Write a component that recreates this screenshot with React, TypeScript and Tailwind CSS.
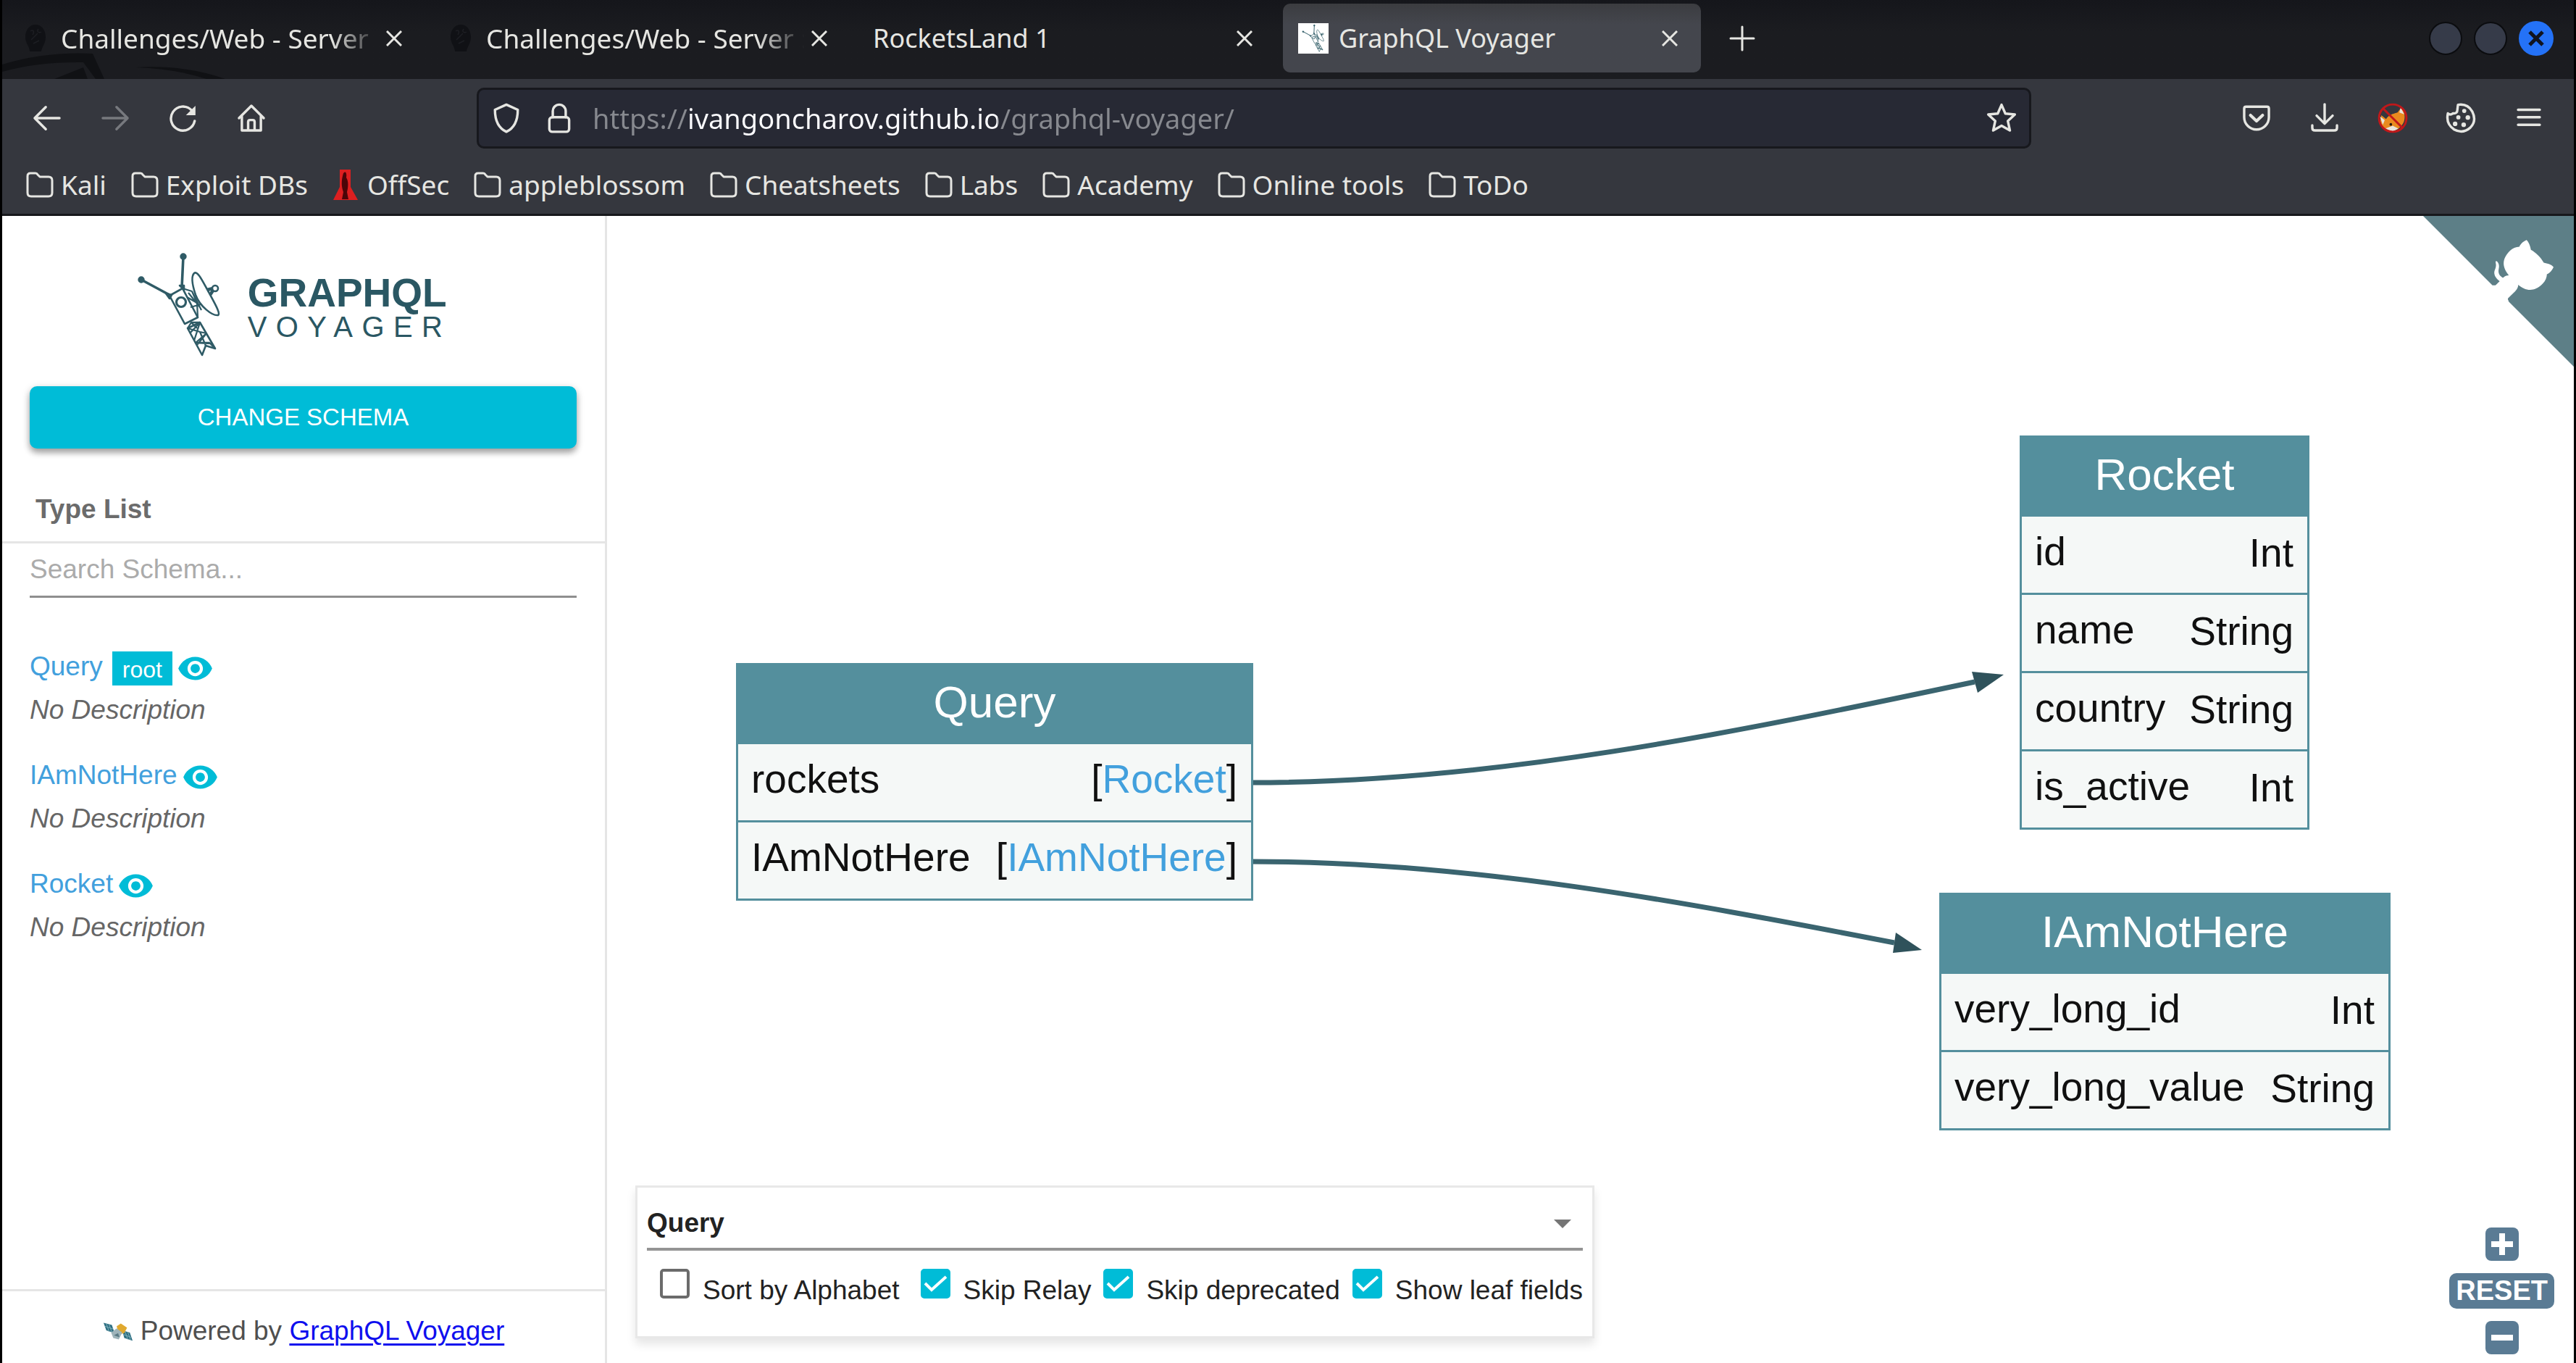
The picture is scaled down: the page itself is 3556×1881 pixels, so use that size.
import { useId, useState } from "react";
import type { ReactNode } from "react";

function VoyagerMark({ className }: { className?: string }) {
  return (
    <svg viewBox="9 10 118 150" className={className} fill="none" stroke="#2f5b66" strokeWidth="2.6" strokeLinejoin="round" aria-hidden="true">
      <path d="M15 50 54 71M73 18 71 61" strokeWidth="3.6" />
      <circle cx="15" cy="50" r="3.4" fill="#2f5b66" />
      <circle cx="73" cy="18" r="3.4" fill="#2f5b66" />
      <path d="m49 69 8 2-3 5ZM68 58l6 0 0 6Z" fill="#2f5b66" />
      <path d="M54 72 75 111 93 102 72 62Z" />
      <circle cx="70" cy="81" r="6.5" strokeWidth="3.2" />
      <path d="M72 62 85 66 92 82 93 102M78 74 92 82M80 68 96 88M83 88 97 84M85 66 98 92" strokeWidth="2.2" />
      <path d="M88 41C93 37 100 53 108 67 116 82 125 97 121 99 113 100 96 87 90 71 85 56 84 45 88 41Z" />
      <path d="M106 64 114 62M110 71 114 65" strokeWidth="4.5" />
      <circle cx="117" cy="62" r="4" />
      <path d="M79 117 99 154 104 141 117 145 96 109Z" />
      <path d="M79 117 96 122 105 124 90 137 109 137 117 145M96 109 88 134M79 117 84 109 96 109 82 124M96 122 104 141M90 137 112 138M84 109 92 117M105 124 92 140" strokeWidth="2.3" />
    </svg>
  );
}

function Icon({ children, className = "size-[42px]" }: { children: ReactNode; className?: string }) {
  return (
    <svg viewBox="0 0 16 16" className={className} fill="none" stroke="currentColor" strokeWidth="1.3" strokeLinecap="round" strokeLinejoin="round" aria-hidden="true">
      {children}
    </svg>
  );
}

function ToolButton({ label, dim, children }: { label: string; dim?: boolean; children: ReactNode }) {
  return (
    <button type="button" aria-label={label} className={dim ? "shrink-0 text-[#77797e]" : "shrink-0 text-[#e6e6e2]"}>
      {children}
    </button>
  );
}

function DarkSeal() {
  return (
    <svg viewBox="0 0 30 40" className="ml-[3px] h-[40px] w-[30px] shrink-0" aria-hidden="true">
      <path d="M15 1c8 0 14 7 14 17 0 9-5 13-6 20H7C7 31 1 27 1 18 1 8 7 1 15 1Z" fill="#101115" />
      <path d="M8 10c4-3 6 1 3 5m8-8c-3 4 1 6 4 4M9 22l9-9m-6 14 8-4" stroke="#1d1e23" strokeWidth="1.5" fill="none" />
    </svg>
  );
}

function Tab({ title, icon, active, fade }: { title: string; icon?: ReactNode; active?: boolean; fade?: boolean }) {
  return (
    <div
      className={
        active
          ? "flex h-[95px] w-[577px] shrink-0 items-center rounded-[10px] bg-linear-to-b from-[#3b3c40] to-[#44464d] to-30% pr-[32px] pl-[21px]"
          : "flex h-[95px] w-[577px] shrink-0 items-center pr-[32px] pl-[21px]"
      }
    >
      {icon}
      <button
        type="button"
        className={
          fade
            ? "min-w-0 flex-1 overflow-hidden pl-[20px] text-left text-[37px] whitespace-nowrap [mask-image:linear-gradient(to_right,#000_84%,transparent_98%)]"
            : active
              ? "min-w-0 flex-1 overflow-hidden pl-[14px] text-left text-[36px] whitespace-nowrap"
              : "min-w-0 flex-1 overflow-hidden text-left text-[36px] whitespace-nowrap"
        }
      >
        {title}
      </button>
      <button type="button" aria-label={"Close " + title} className="shrink-0">
        <svg viewBox="0 0 22 22" className="size-[22px]" fill="none" stroke="currentColor" strokeWidth="3" aria-hidden="true">
          <path d="m1 1 20 20M21 1 1 21" />
        </svg>
      </button>
    </div>
  );
}

function Bookmark({ label, red }: { label: string; red?: boolean }) {
  return (
    <a href="#" className="flex items-center gap-[10px]">
      {red ? (
        <svg viewBox="0 0 38 44" className="h-[44px] w-[38px]" aria-hidden="true">
          <path d="M10 1h15v24l10 18H1l9-18Z" fill="#dd1f20" />
          <path d="M15 6c3-4 5 0 4 6 4 6 2 16 1 20l2 10h-9l2-10c-3-8-3-16 0-26Z" fill="#4c0508" />
        </svg>
      ) : (
        <svg viewBox="0 0 38 38" className="size-[38px]" fill="none" stroke="currentColor" strokeWidth="3" strokeLinejoin="round" aria-hidden="true">
          <path d="M2 30V7q0-4 4-4h7q2 0 3 2l3 3h12q5 0 5 5v17q0 5-5 5H7q-5 0-5-5Z" />
        </svg>
      )}
      {label}
    </a>
  );
}

function BrowserChrome() {
  return (
    <header className="shrink-0 font-['Noto_Sans',sans-serif] text-[37px] leading-[52px] text-[#e6e6e2]">
      <div className="relative h-[109px] bg-linear-to-b from-[#15161b] to-[#1b1c20] to-40%">
        <svg viewBox="0 0 320 40" className="absolute bottom-0 left-0 h-[40px] w-[320px]" fill="#101114" aria-hidden="true">
          <path d="M0 20Q60 2 125 5l16 35h-12L112 17Q50 16 0 30ZM72 40l40-16 6 16Z" />
          <path d="M185 24Q250 20 308 40H282Q240 26 185 24Z" />
        </svg>
        <div className="relative flex h-full items-center gap-[10px] pb-1 pl-[7px]">
          <Tab title="Challenges/Web - Server |" icon={<DarkSeal />} fade />
          <Tab title="Challenges/Web - Server :" icon={<DarkSeal />} fade />
          <Tab title="RocketsLand 1" />
          <Tab
            title="GraphQL Voyager"
            active
            icon={
              <span className="flex size-[42px] shrink-0 items-center justify-center bg-white">
                <VoyagerMark className="h-[40px] w-[32px]" />
              </span>
            }
          />
          <button type="button" aria-label="New tab" className="ml-[26px]">
            <svg viewBox="0 0 42 42" className="size-[42px]" fill="none" stroke="currentColor" strokeWidth="3" strokeLinecap="round" aria-hidden="true">
              <path d="M21 5v32M5 21h32" />
            </svg>
          </button>
          <div className="ml-auto flex items-center gap-[16px] pr-[28px]">
            <button type="button" aria-label="Minimize" className="size-[46px] rounded-full border-2 border-[#0b0c0f] bg-[#363b49]" />
            <button type="button" aria-label="Maximize" className="size-[46px] rounded-full border-2 border-[#0b0c0f] bg-[#363b49]" />
            <button type="button" aria-label="Close window" className="flex size-[48px] items-center justify-center rounded-full bg-[#2472f7]">
              <svg viewBox="0 0 24 24" className="size-[24px]" fill="none" stroke="#10141f" strokeWidth="5" aria-hidden="true">
                <path d="m3 3 18 18M21 3 3 21" />
              </svg>
            </button>
          </div>
        </div>
      </div>

      <div className="border-b-3 border-[#17181c] bg-[#35373e]">
        <div className="flex h-[107px] items-center pr-[41px] pl-[41px]">
          <nav aria-label="Navigation" className="flex items-center gap-[52px]">
            <ToolButton label="Back">
              <Icon><path d="M7.3 2.2 1.5 8l5.800 5.800M1.500 8h13" /></Icon>
            </ToolButton>
            <ToolButton label="Forward" dim>
              <Icon><path d="M8.700 2.200 14.500 8l-5.800 5.800M14.500 8h-13" /></Icon>
            </ToolButton>
            <ToolButton label="Reload">
              <Icon><path d="M14 9.500A6.300 6.300 0 1 1 12.300 3.800" /><path d="M14.400 1.500v5h-5Z" fill="currentColor" stroke="none" /></Icon>
            </ToolButton>
            <ToolButton label="Home">
              <Icon><path d="M1.500 8 8 1.500 14.500 8M3 7v7.500h10V7M6.300 14.300V10q0-1 1-1h1.400q1 0 1 1v4.300" /></Icon>
            </ToolButton>
          </nav>
          <div className="mr-[290px] ml-[290px] flex h-[84px] min-w-0 flex-1 items-center rounded-[10px] border-3 border-[#17181d] bg-[#272934] pr-[17px] pl-[17px]">
            <ToolButton label="Tracking protection">
              <Icon><path d="M8 .9 14 3.600C14 9 12 13.300 8 15.200 4 13.300 2 9 2 3.600Z" /></Icon>
            </ToolButton>
            <span className="w-[31px]" />
            <ToolButton label="Connection security">
              <Icon><rect x="2.800" y="7.500" width="10.400" height="7.700" rx="1.500" /><path d="M4.600 7.500V4.300a3.400 3.400 0 0 1 6.800 0v3.200" /></Icon>
            </ToolButton>
            <input
              type="text"
              aria-label="Address"
              defaultValue="https://ivangoncharov.github.io/graphql-voyager/"
              className="ml-[25px] h-[60px] min-w-0 flex-1 bg-[linear-gradient(to_right,#87898f_132px,#fbfbfe_132px,#fbfbfe_559px,#87898f_559px)] bg-clip-text text-[38px] text-transparent outline-none"
            />
            <ToolButton label="Bookmark this page">
              <Icon><path d="m8 1 2 4.600 5 .5-3.700 3.400 1.100 5L8 12l-4.400 2.500 1.100-5L1 6.100l5-.5Z" /></Icon>
            </ToolButton>
          </div>
          <div className="flex items-center gap-[52px]">
            <ToolButton label="Save to Pocket">
              <Icon><path d="M2.500 2h11q1 0 1 1v4.500a6.500 6.500 0 0 1-13 0V3q0-1 1-1Z" /><path d="M4.800 6.500 8 9.500l3.200-3" strokeWidth="1.600" /></Icon>
            </ToolButton>
            <ToolButton label="Downloads">
              <Icon><path d="M8 .7v10M3.800 6.700 8 10.900l4.200-4.200M1.500 11.800V13q0 1.500 1.500 1.500h10q1.500 0 1.500-1.500v-1.200" /></Icon>
            </ToolButton>
            <ToolButton label="Proxy extension">
              <Icon>
                <path d="M12.500 2.500c2 2 2 5 1.500 7-1 3-4 5.500-7 5-3 0-5-2-5.500-5L2 6.500l2.500 2C6 6 9 5.500 10.500 5Z" fill="#ea8a1e" stroke="none" />
                <path d="M12.200 2.300 14 6l-2.500-1ZM1.200 7l2.600 2-1 2.500ZM4 13.500 8 12l3 1.500-3 1.500Z" fill="#e8e4dc" stroke="none" />
                <circle cx="7" cy="11.300" r=".7" fill="#2b1a10" stroke="none" />
                <circle cx="8" cy="8" r="7.200" stroke="#c0181a" strokeWidth="1.100" />
                <path d="m3 3 10 10" stroke="#c0181a" strokeWidth="1.100" />
              </Icon>
            </ToolButton>
            <ToolButton label="Cookie extension">
              <Icon>
                <path d="M6.500 1q5-.8 7.500 3.500 2.500 5-1 8.500-4 3.500-8.500 1Q0 11 1.200 5.500q1.300 1.200 2.600 0 2.400.3 2.400-2Z" />
                <g fill="currentColor" stroke="none"><circle cx="9.800" cy="4.200" r="1.100" /><circle cx="6.700" cy="7.600" r="1.100" /><circle cx="11.700" cy="7.700" r="1.200" /><circle cx="5" cy="11" r="1.200" /><circle cx="9.500" cy="11.500" r="1.200" /></g>
              </Icon>
            </ToolButton>
            <ToolButton label="Menu">
              <Icon><path d="M2.300 3.600h11.400M2.300 7.500h11.400M2.300 11.500h11.400" /></Icon>
            </ToolButton>
          </div>
        </div>
        <nav aria-label="Bookmarks" className="flex h-[79px] items-start gap-[34px] pt-[13px] pl-[33px]">
          <Bookmark label="Kali" />
          <Bookmark label="Exploit DBs" />
          <Bookmark label="OffSec" red />
          <Bookmark label="appleblossom" />
          <Bookmark label="Cheatsheets" />
          <Bookmark label="Labs" />
          <Bookmark label="Academy" />
          <Bookmark label="Online tools" />
          <Bookmark label="ToDo" />
        </nav>
      </div>
    </header>
  );
}

function TypeEntry({ name, root }: { name: string; root?: boolean }) {
  return (
    <li className="mb-[30px] leading-[60px]">
      <div className="flex items-center">
        <a href="#" className="text-[#42a0dd]">{name}</a>
        {root && (
          <span className="mt-[5px] ml-[13px] flex h-[47px] items-center bg-[#00bcd7] px-[14px] pt-[2px] text-[32px] text-white">root</span>
        )}
        <button type="button" aria-label={"Focus " + name} className="mt-[5px] ml-[6px]">
          <svg viewBox="0 0 24 24" className="size-[51px]" fill="#00bcd7" aria-hidden="true">
            <path d="M12 4.500C7 4.500 2.730 7.610 1 12c1.730 4.390 6 7.500 11 7.500s9.270-3.110 11-7.500c-1.730-4.390-6-7.500-11-7.500zM12 17c-2.760 0-5-2.240-5-5s2.240-5 5-5 5 2.240 5 5-2.240 5-5 5zm0-8c-1.660 0-3 1.340-3 3s1.340 3 3 3 3-1.340 3-3-1.340-3-3-3z" />
          </svg>
        </button>
      </div>
      <p className="text-[#666] italic">No Description</p>
    </li>
  );
}

function Satellite() {
  return (
    <svg viewBox="0 0 44 30" className="h-[30px] w-[42px]" aria-hidden="true">
      <path d="m1 3 12 3 4 12-12-4Z" fill="#2e6f82" />
      <path d="m28 14 11 3 4 12-12-4Z" fill="#2e6f82" />
      <path d="M5 4l4 12M9 5l4 12M3 8l12 4M32 15l4 12M36 16l4 12M30 20l11 4" stroke="#7fb0bb" strokeWidth="1" />
      <path d="m20 8 6-4 9 6-4 8-8 2Z" fill="#e0a92f" />
      <path d="m12 17 8-6 8 6-5 10-8-2Z" fill="#9fb4ba" />
      <path d="m16 21 6-3 2 6Z" fill="#5a7a84" />
    </svg>
  );
}

function Sidebar() {
  return (
    <aside className="flex w-[835px] shrink-0 flex-col border-r-3 border-[#e5e5e5] text-[37px] leading-[60px]">
      <div className="flex items-center justify-center pt-[48px] pr-[26px] text-[#2a5763]">
        <VoyagerMark className="h-[150px] w-[118px]" />
        <h1 className="pt-[6px] pl-[35px]">
          <span className="block text-[55px] leading-[54px] font-bold">GRAPHQL</span>
          <span className="block text-[40px] leading-[41px] tracking-[0.31em]">VOYAGER</span>
        </h1>
      </div>
      <button
        type="button"
        className="mt-[37px] mr-[39px] ml-[38px] h-[86px] rounded-[10px] bg-[#00bcd7] text-[33px] leading-[86px] text-white shadow-[0_6px_8px_rgba(0,0,0,0.3),0_2px_12px_rgba(0,0,0,0.15)]"
      >
        CHANGE SCHEMA
      </button>
      <h2 className="border-b-3 border-[#e5e5e5] pt-[54px] pb-[14px] pl-[46px] font-bold text-[#6b6b6b]">Type List</h2>
      <input
        type="text"
        aria-label="Search schema"
        placeholder="Search Schema..."
        className="mr-[39px] ml-[38px] h-[75px] border-b-3 border-[#8f8f8f] outline-none placeholder:text-[#ababab]"
      />
      <ul className="flex-1 pt-[65px] pl-[38px]">
        <TypeEntry name="Query" root />
        <TypeEntry name="IAmNotHere" />
        <TypeEntry name="Rocket" />
      </ul>
      <p className="flex h-[102px] items-center justify-center border-t-3 border-[#e5e5e5] pt-[10px] text-[#4f4f4f]">
        <Satellite />
        <span className="pl-[10px]">
          Powered by{" "}
          <a href="#" className="text-[#0f0fee] underline decoration-3 underline-offset-[5px]">GraphQL Voyager</a>
        </span>
      </p>
    </aside>
  );
}

type Field = { name: string; type: string; list?: boolean };

function Entity({ title, fields, className }: { title: string; fields: Field[]; className: string }) {
  return (
    <section className={className}>
      <h3 className="h-[112px] bg-[#548f9d] text-center text-[62px] leading-[108px] text-white">{title}</h3>
      <ul className="border-x-3 border-[#548f9d]">
        {fields.map((f) => (
          <li key={f.name} className="flex h-[108px] items-center justify-between border-b-3 border-[#548f9d] bg-[#f5f8f7] pr-[19px] pb-[9px] pl-[18px] text-[55px] leading-[64px] text-[#101010]">
            <span>{f.name}</span>
            {f.list ? (
              <span>[<a href="#" className="text-[#42a0dd]">{f.type}</a>]</span>
            ) : (
              <span className="pt-[4px]">{f.type}</span>
            )}
          </li>
        ))}
      </ul>
    </section>
  );
}

function Check({ label, initial, className }: { label: string; initial: boolean; className?: string }) {
  const [on, setOn] = useState(initial);
  const id = useId();
  return (
    <div className={className}>
      <span className="relative flex size-[41px]">
        <input
          id={id}
          type="checkbox"
          checked={on}
          onChange={() => setOn(!on)}
          className="size-[41px] appearance-none rounded-[5px] border-4 border-[#6b6b6b] checked:border-[#00bcd7] checked:bg-[#00bcd7]"
        />
        {on && (
          <svg viewBox="0 0 41 41" className="pointer-events-none absolute inset-0 size-[41px]" fill="none" stroke="#fff" strokeWidth="4" aria-hidden="true">
            <path d="m6 20 9 9L35 11" />
          </svg>
        )}
      </span>
      <label htmlFor={id} className="pt-[20px] pl-[18px] whitespace-nowrap">{label}</label>
    </div>
  );
}

function Settings() {
  return (
    <div className="absolute bottom-[34px] left-[39px] border-3 border-[#e8e8e8] bg-white px-[13px] pb-[43px] text-[37px] leading-[40px] text-[#222] shadow-[0_8px_12px_rgba(0,0,0,0.1)]">
      <div className="relative">
        <select aria-label="Root type" className="h-[87px] w-full appearance-none border-b-4 border-[#949494] pt-[14px] font-bold outline-none">
          <option>Query</option>
        </select>
        <svg viewBox="0 0 24 12" className="pointer-events-none absolute top-[44px] right-[16px] h-[12px] w-[24px]" fill="#757575" aria-hidden="true">
          <path d="M0 0h24L12 12Z" />
        </svg>
      </div>
      <div className="flex items-center gap-[17px] pt-[15px] pl-[18px]">
        <Check label="Sort by Alphabet" initial={false} className="mr-[12px] flex items-center" />
        <Check label="Skip Relay" initial className="flex items-center" />
        <Check label="Skip deprecated" initial className="flex items-center" />
        <Check label="Show leaf fields" initial className="flex items-center" />
      </div>
    </div>
  );
}

function GithubCorner() {
  return (
    <a href="#" aria-label="View source on GitHub" className="absolute top-0 right-0">
      <svg viewBox="0 0 250 250" className="size-[208px]" fill="#fff" aria-hidden="true">
        <path d="M0,0 L115,115 L130,115 L142,142 L250,250 L250,0 Z" fill="#5d7f87" />
        <path d="M128.3,109.0 C113.8,99.7 119.0,89.6 119.0,89.6 C122.0,82.7 120.5,78.6 120.5,78.6 C119.2,72.0 123.4,76.3 123.4,76.3 C127.3,80.9 125.5,87.3 125.5,87.3 C122.9,97.6 130.6,101.9 134.4,103.2" />
        <path d="M115.0,115.0 C114.9,115.1 118.7,116.5 119.8,115.4 L133.7,101.6 C136.9,99.2 139.9,98.4 142.2,98.6 C133.8,88.0 127.5,74.4 143.8,58.0 C148.5,53.4 154.0,51.2 159.7,51.0 C160.3,49.4 163.2,43.6 171.4,40.1 C171.4,40.1 176.1,42.5 178.8,56.2 C183.1,58.6 187.2,61.8 190.9,65.4 C194.5,69.0 197.7,73.2 200.1,77.6 C213.8,80.2 216.3,84.9 216.3,84.9 C212.7,93.1 206.9,96.0 205.4,96.6 C205.1,102.4 203.0,107.8 198.3,112.5 C181.9,128.9 168.3,122.5 157.7,114.1 C157.9,116.9 156.7,120.9 152.7,124.9 L141.0,136.5 C139.8,137.7 141.6,141.9 141.8,141.8 Z" />
      </svg>
    </a>
  );
}

function ZoomControls() {
  return (
    <div className="absolute right-[27px] bottom-[12px] flex flex-col items-center gap-[17px]">
      <button type="button" aria-label="Zoom in" className="flex size-[46px] items-center justify-center rounded-[8px] bg-[#5a7b94]">
        <svg viewBox="0 0 30 30" className="size-[30px]" stroke="#fff" strokeWidth="8" aria-hidden="true"><path d="M15 0v30M0 15h30" /></svg>
      </button>
      <button type="button" className="h-[49px] rounded-[10px] bg-[#5a7b94] px-[9px] text-[38px] leading-[49px] font-bold text-white">RESET</button>
      <button type="button" aria-label="Zoom out" className="flex size-[46px] items-center justify-center rounded-[8px] bg-[#5a7b94]">
        <svg viewBox="0 0 30 30" className="size-[30px]" stroke="#fff" strokeWidth="8" aria-hidden="true"><path d="M0 15h30" /></svg>
      </button>
    </div>
  );
}

function Diagram() {
  return (
    <main className="relative min-w-0 flex-1 overflow-hidden">
      <svg viewBox="0 0 2000 1200" className="absolute top-0 left-0 h-[1200px] w-[2000px]" fill="none" stroke="#3a646f" strokeWidth="7" aria-hidden="true">
        <path d="M890 782C1222 782 1552 714 1888 643" />
        <path d="M890 891C1192 891 1482 946 1777 1003" />
        <path d="m1884 629 44 4-36 25ZM1779 989l36 24-40 4Z" fill="#2f525b" stroke="none" />
      </svg>
      <Entity
        title="Query"
        className="absolute top-[617px] left-[178px] w-[714px]"
        fields={[{ name: "rockets", type: "Rocket", list: true }, { name: "IAmNotHere", type: "IAmNotHere", list: true }]}
      />
      <Entity
        title="Rocket"
        className="absolute top-[303px] left-[1950px] w-[400px]"
        fields={[{ name: "id", type: "Int" }, { name: "name", type: "String" }, { name: "country", type: "String" }, { name: "is_active", type: "Int" }]}
      />
      <Entity
        title="IAmNotHere"
        className="absolute top-[934px] left-[1839px] w-[623px]"
        fields={[{ name: "very_long_id", type: "Int" }, { name: "very_long_value", type: "String" }]}
      />
      <GithubCorner />
      <Settings />
      <ZoomControls />
    </main>
  );
}

export default function App() {
  return (
    <div className="flex h-screen flex-col bg-black px-[3px] font-['Liberation_Sans',Arial,sans-serif]">
      <BrowserChrome />
      <div className="flex min-h-0 flex-1 bg-white">
        <Sidebar />
        <Diagram />
      </div>
    </div>
  );
}
